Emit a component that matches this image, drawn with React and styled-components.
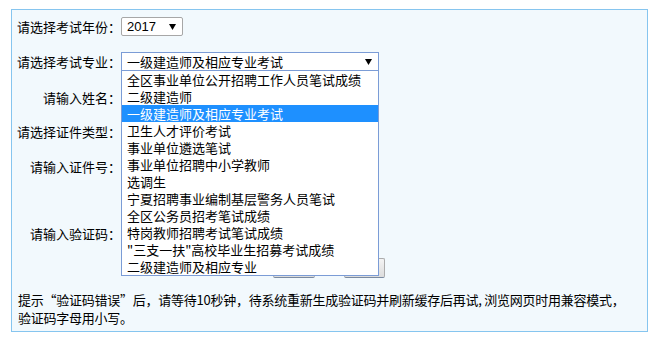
import React from "react";
import styled, { createGlobalStyle } from "styled-components";

const Global = createGlobalStyle`
  html, body { margin: 0; padding: 0; background: #ffffff; }
  body { font-family: "Noto Sans CJK SC", "Liberation Sans", sans-serif; font-size: 13px; color: #000; }
`;

const Panel = styled.div`
  box-sizing: border-box;
  margin: 9px 0 0 11px;
  width: 637px;
  height: 323px;
  border: 1px solid #86c5ef;
  background: #f2f9fd;
  display: flex;
  flex-direction: column;
`;

const Form = styled.div`
  display: flex;
  flex-direction: column;
`;

const FormRow = styled.div`
  display: flex;
  align-items: center;
  height: ${(p) => p.$h}px;
  margin-top: ${(p) => p.$mt || 0}px;
`;

const Label = styled.div`
  width: 109px;
  text-align: right;
  line-height: 16px;
  white-space: nowrap;
  flex: none;
`;

const Field = styled.div`
  position: relative;
  display: flex;
  align-items: center;
  gap: 6px;
`;

const SelectBox = styled.div`
  box-sizing: border-box;
  width: ${(p) => p.$w}px;
  height: 19px;
  border: 1px solid ${(p) => (p.$focus ? "#7b9cd6" : "#a7a7a7")};
  border-radius: ${(p) => (p.$focus ? 0 : 2)}px;
  background: #fff;
  display: flex;
  align-items: center;
  justify-content: space-between;
  padding: 0 6px 0 5px;
  font-family: ${(p) => (p.$latin ? '"Liberation Sans", "Noto Sans CJK SC", sans-serif' : '"Noto Sans CJK SC", sans-serif')};
  font-size: 13px;
  line-height: 17px;
  white-space: nowrap;
`;

const Arrow = () => (
  <svg width="7" height="6" viewBox="0 0 7 6">
    <polygon points="0,0 7,0 3.5,6" fill="#000" />
  </svg>
);

const TextInput = styled.div`
  box-sizing: border-box;
  width: ${(p) => p.$w}px;
  height: 20px;
  border: 1px solid #a7a7a7;
  background: #fff;
`;

const Captcha = styled.div`
  width: 60px;
  height: 24px;
  background: #dfe8ef;
`;

const DropList = styled.ul`
  position: absolute;
  z-index: 5;
  top: 18px;
  left: 0;
  box-sizing: border-box;
  width: 258px;
  margin: 0;
  padding: 0;
  list-style: none;
  background: #fff;
  border: 1px solid #7b9cd6;
`;

const Option = styled.li`
  height: 17px;
  line-height: 17px;
  padding-left: 5px;
  white-space: nowrap;
  overflow: hidden;
  background: ${(p) => (p.$active ? "#1e90ff" : "transparent")};
  color: ${(p) => (p.$active ? "#fff" : "#000")};
`;

const ButtonRow = styled.div`
  display: flex;
  gap: 29px;
  height: 20px;
  padding-left: 261px;
`;

const Button = styled.button`
  box-sizing: border-box;
  width: ${(p) => p.$w}px;
  height: 20px;
  padding: 0;
  border: 1px solid #acacac;
  border-bottom-color: #7a8aa0;
  border-radius: 2px;
  background: linear-gradient(#f4f4f4, #dcdcdc);
`;

const Hint = styled.p`
  margin: 13px 0 0;
  padding: 0 6px;
  line-height: 18px;
  letter-spacing: -0.25px;
  white-space: nowrap;
`;

const options = [
  "全区事业单位公开招聘工作人员笔试成绩",
  "二级建造师",
  "一级建造师及相应专业考试",
  "卫生人才评价考试",
  "事业单位遴选笔试",
  "事业单位招聘中小学教师",
  "选调生",
  "宁夏招聘事业编制基层警务人员笔试",
  "全区公务员招考笔试成绩",
  "特岗教师招聘考试笔试成绩",
  "\"三支一扶\"高校毕业生招募考试成绩",
  "二级建造师及相应专业",
];

export default function App() {
  return (
    <>
      <Global />
      <Panel>
        <Form>
          <FormRow $h={33}>
            <Label>请选择考试年份：</Label>
            <Field>
              <SelectBox $w={62} $latin>
                <span>2017</span>
                <Arrow />
              </SelectBox>
            </Field>
          </FormRow>
          <FormRow $h={37}>
            <Label>请选择考试专业：</Label>
            <Field>
              <SelectBox $w={258} $focus>
                <span>一级建造师及相应专业考试</span>
                <Arrow />
              </SelectBox>
              <DropList>
                {options.map((o, i) => (
                  <Option key={i} $active={i === 2}>
                    {o}
                  </Option>
                ))}
              </DropList>
            </Field>
          </FormRow>
          <FormRow $h={36}>
            <Label>请输入姓名：</Label>
            <Field>
              <TextInput $w={150} />
            </Field>
          </FormRow>
          <FormRow $h={32}>
            <Label>请选择证件类型：</Label>
            <Field>
              <SelectBox $w={120}>
                <span />
                <Arrow />
              </SelectBox>
            </Field>
          </FormRow>
          <FormRow $h={38}>
            <Label>请输入证件号：</Label>
            <Field>
              <TextInput $w={200} />
            </Field>
          </FormRow>
          <FormRow $h={48} $mt={24}>
            <Label>请输入验证码：</Label>
            <Field>
              <TextInput $w={100} />
              <Captcha />
            </Field>
          </FormRow>
          <ButtonRow>
            <Button $w={42} aria-label="查询" />
            <Button $w={41} aria-label="重置" />
          </ButtonRow>
        </Form>
        <Hint>
          提示“验证码错误”后，请等待10秒钟，待系统重新生成验证码并刷新缓存后再试, 浏览网页时用兼容模式，
          <br />
          验证码字母用小写。
        </Hint>
      </Panel>
    </>
  );
}
